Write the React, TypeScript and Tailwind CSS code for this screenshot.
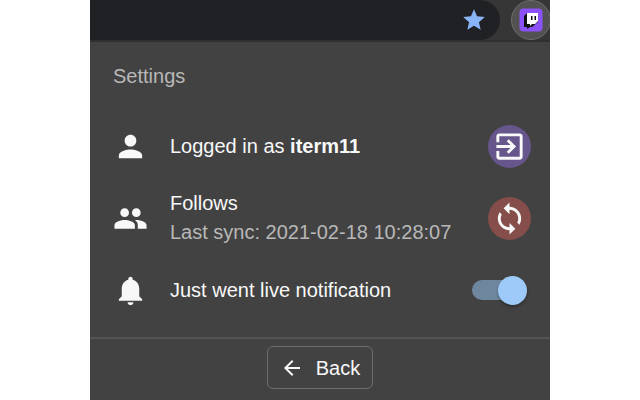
import React, { useState } from "react";

function Icon({ d, size = "size-[35px]" }: { d: string; size?: string }) {
  return (
    <svg viewBox="0 0 24 24" className={`${size} shrink-0 fill-current`} aria-hidden="true">
      <path d={d} />
    </svg>
  );
}

const icons = {
  person:
    "M12 12c2.21 0 4-1.79 4-4s-1.79-4-4-4-4 1.79-4 4 1.79 4 4 4zm0 2c-2.67 0-8 1.34-8 4v2h16v-2c0-2.66-5.33-4-8-4z",
  people:
    "M16 11c1.66 0 2.99-1.34 2.99-3S17.66 5 16 5c-1.66 0-3 1.34-3 3s1.34 3 3 3zm-8 0c1.66 0 2.99-1.34 2.99-3S9.66 5 8 5C6.34 5 5 6.34 5 8s1.34 3 3 3zm0 2c-2.33 0-7 1.17-7 3.5V19h14v-2.5c0-2.33-4.67-3.5-7-3.5zm8 0c-.29 0-.62.02-.97.05 1.16.84 1.97 1.97 1.97 3.45V19h6v-2.5c0-2.33-4.67-3.5-7-3.5z",
  bell: "M12 22c1.1 0 2-.9 2-2h-4c0 1.1.89 2 2 2zm6-6v-5c0-3.07-1.64-5.64-4.5-6.32V4c0-.83-.67-1.5-1.5-1.5s-1.5.67-1.5 1.5v.68C7.63 5.36 6 7.92 6 11v5l-2 2v1h16v-1l-2-2z",
  exit: "M10.09 15.59L11.5 17l5-5-5-5-1.41 1.41L12.67 11H3v2h9.67l-2.58 2.59zM19 3H5c-1.11 0-2 .9-2 2v4h2V5h14v14H5v-4H3v4c0 1.1.89 2 2 2h14c1.1 0 2-.9 2-2V5c0-1.1-.9-2-2-2z",
  sync: "M12 4V1L8 5l4 4V6c3.31 0 6 2.69 6 6 0 1.01-.25 1.97-.7 2.8l1.46 1.46C19.54 15.03 20 13.57 20 12c0-4.42-3.58-8-8-8zm0 14c-3.31 0-6-2.69-6-6 0-1.01.25-1.97.7-2.8L5.24 7.74C4.46 8.97 4 10.43 4 12c0 4.42 3.58 8 8 8v3l4-4-4-4v3z",
  back: "M20 11H7.83l5.59-5.59L12 4l-8 8 8 8 1.41-1.41L7.83 13H20v-2z",
  star: "M12 17.27L18.18 21l-1.64-7.03L22 9.24l-7.19-.61L12 2 9.19 8.63 2 9.24l5.46 4.73L5.82 21z",
};

function Row({ icon, children, action }: { icon: string; children: React.ReactNode; action: React.ReactNode }) {
  return (
    <li className="flex h-18 items-center text-[#f8f8f8]">
      <Icon d={icon} />
      <div className="ml-[22px] min-w-0 flex-1 leading-[29px]">{children}</div>
      {action}
    </li>
  );
}

export default function App() {
  const [live, setLive] = useState(true);
  return (
    <div className="min-h-screen bg-white px-[90px] font-['Liberation_Sans',Arial,sans-serif] text-xl">
      <div className="flex min-h-screen flex-col bg-[#424242]">
        <header className="flex h-[42px] items-start overflow-hidden border-b-2 border-[#303030] bg-[#363636]">
          <div className="flex h-10 flex-1 items-center justify-end rounded-r-full bg-[#202124] pr-[13px]">
            <button aria-label="Bookmark" className="text-[#8ab4f8]">
              <Icon d={icons.star} size="size-[26px]" />
            </button>
          </div>
          <button
            aria-label="Twitch extension"
            className="ml-[11px] -mr-px flex size-10 items-center justify-center rounded-full border border-[#6c6c6c] bg-[#525252]"
          >
            <svg viewBox="0 0 24 24" className="size-6" aria-hidden="true">
              <rect x="0.5" y="0.5" width="23" height="23" rx="4" fill="#8c52fa" />
              <path d="M8 5h11v9l-6 5h-2l-3 2v-2H5V8z" fill="#111" />
              <path d="M8 5h11v8l-3 3h-3l-2 2v-2H8z" fill="#fff" />
              <path d="M12 8h1.500v4h-1.500zM15.500 8h1.500v4h-1.500z" fill="#111" />
            </svg>
          </button>
        </header>

        <main className="px-[23px] pb-[11px]">
          <h1 className="flex h-[68px] items-center text-[#b8b8b8]">Settings</h1>
          <ul>
            <Row
              icon={icons.person}
              action={
                <button aria-label="Log out" className="mr-[-4px] flex size-[43px] items-center justify-center rounded-full bg-[#67568c]">
                  <Icon d={icons.exit} />
                </button>
              }
            >
              Logged in as <b>iterm11</b>
            </Row>
            <Row
              icon={icons.people}
              action={
                <button aria-label="Sync follows" className="mr-[-4px] flex size-[43px] items-center justify-center rounded-full bg-[#854e4b]">
                  <Icon d={icons.sync} />
                </button>
              }
            >
              <p>Follows</p>
              <p className="text-[#b8b8b8]">Last sync: 2021-02-18 10:28:07</p>
            </Row>
            <Row
              icon={icons.bell}
              action={
                <input
                  type="checkbox"
                  id="live"
                  checked={live}
                  onChange={(e) => setLive(e.target.checked)}
                  className="flex h-5 w-[55px] appearance-none items-center rounded-full bg-linear-to-r from-[#6f879e] to-[#6f879e] bg-[length:49px_20px] bg-no-repeat before:size-[29px] before:rounded-full before:bg-[#9dcaf8] before:shadow-[0_2px_3px_rgba(0,0,0,0.3)] checked:before:ml-auto"
                />
              }
            >
              <label htmlFor="live">Just went live notification</label>
            </Row>
          </ul>
        </main>

        <footer className="flex justify-center border-t-2 border-[#535353] pt-[7px] pb-[11px]">
          <button className="flex h-[43px] w-[106px] items-center justify-center gap-3 rounded-md border border-[#6c6c6c] text-[#f8f8f8]">
            <Icon d={icons.back} size="size-6" />
            Back
          </button>
        </footer>
      </div>
    </div>
  );
}
